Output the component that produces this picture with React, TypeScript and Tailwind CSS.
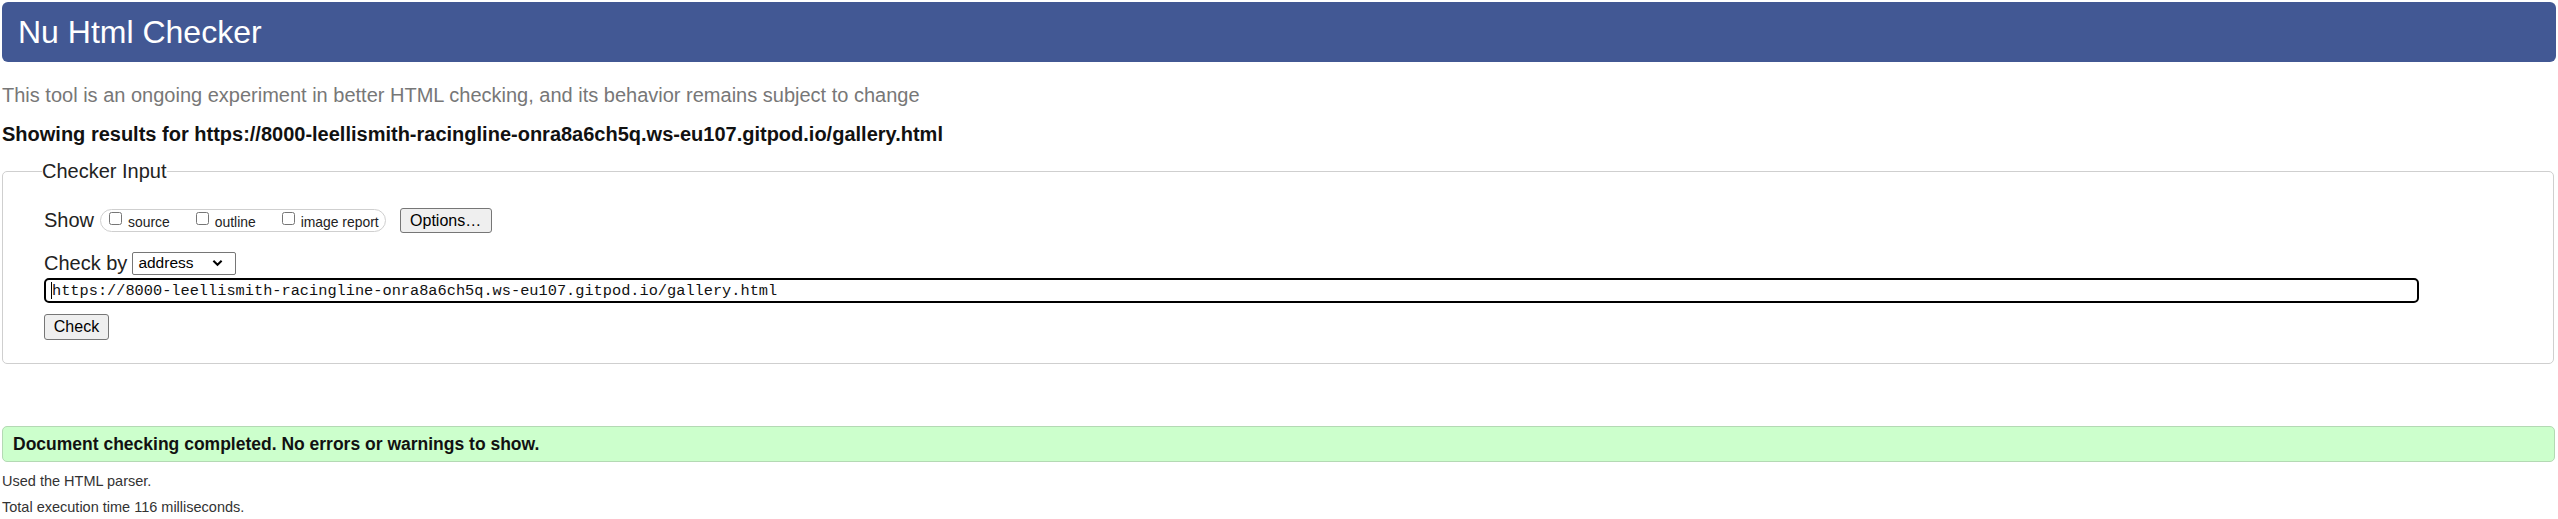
const checkUrl =
  "https://8000-leellismith-racingline-onra8a6ch5q.ws-eu107.gitpod.io/gallery.html";

const showOptions = ["source", "outline", "image report"];

const App = () => {
  return (
    <div className="h-screen overflow-hidden bg-white px-[2px] pt-[2px] font-['Liberation_Sans',Arial,sans-serif] text-[#222]">
      <h1 className="h-[60px] rounded-[6px] bg-[#425894] pl-[16px] text-[32px] leading-[60px] text-white">
        Nu Html Checker
      </h1>

      <p className="mt-[22px] text-[20px] leading-[23px] text-[#777]">
        This tool is an ongoing experiment in better HTML checking, and its behavior remains
        subject to change
      </p>
      <p className="mt-[16px] text-[20px] font-bold leading-[23px] text-[#111]">
        Showing results for {checkUrl}
      </p>

      <fieldset className="mr-[2px] mt-[12px] rounded-[5px] border border-[#cfcfcf] pb-[23px] pl-[41px]">
        <legend className="-ml-[2px] text-[20px] leading-[26px] text-[#222]">Checker Input</legend>

        <div className="mt-[24px] flex h-[25px] items-center">
          <span className="text-[20px] leading-[23px]">Show</span>
          <div className="ml-[6px] flex h-[23px] items-center gap-[26px] rounded-full border border-[#cfcfcf] pl-[8px] pr-[6px]">
            {showOptions.map((option) => (
              <label className="flex items-center gap-[6px]" key={option}>
                <input className="m-0 -mt-[4px] h-[13px] w-[13px]" type="checkbox" />
                <span className="mt-[3px] text-[13.9px] leading-[16px] text-[#222]">{option}</span>
              </label>
            ))}
          </div>
          <button
            className="ml-[14px] h-[25px] w-[92px] rounded-[3px] border border-[#767676] bg-[#efefef] text-[16px] leading-[20px] text-black"
            type="button"
          >
            Options…
          </button>
        </div>

        <div className="mt-[19px] flex h-[22px] items-center">
          <span className="text-[20px] leading-[23px]">Check by</span>
          <div className="ml-[5px] flex h-[23px] w-[104px] items-center justify-between rounded-[2px] border border-[#767676] pl-[5px] pr-[12px] text-[15.5px] text-black">
            <span>address</span>
            <svg fill="none" height="8" viewBox="0 0 12 8" width="11">
              <path d="M1.5 1.5 L6 6 L10.5 1.5" stroke="#000" strokeWidth="2.2" />
            </svg>
          </div>
        </div>

        <div className="mt-[4px] flex h-[25px] w-[2375px] items-center rounded-[5px] border-2 border-black pl-[5px]">
          <span className="h-[17px] w-[1px] bg-black" />
          <span className="font-['Liberation_Mono','DejaVu_Sans_Mono',monospace] text-[15.3px] leading-[20px] text-[#111]">
            {checkUrl}
          </span>
        </div>

        <button
          className="mt-[11px] h-[26px] w-[65px] rounded-[3px] border border-[#767676] bg-[#efefef] text-[16px] leading-[20px] text-black"
          type="button"
        >
          Check
        </button>
      </fieldset>

      <div className="mr-[1px] mt-[62px] flex h-[36px] items-center rounded-[5px] border border-[#b4d9b4] bg-[#ccffcc] pl-[10px] text-[17.5px] font-bold text-[#111]">
        Document checking completed. No errors or warnings to show.
      </div>

      <p className="mt-[11px] text-[14.5px] leading-[17px] text-[#333]">Used the HTML parser.</p>
      <p className="mt-[9px] text-[14.5px] leading-[17px] text-[#333]">
        Total execution time 116 milliseconds.
      </p>
    </div>
  );
};

export default App;
